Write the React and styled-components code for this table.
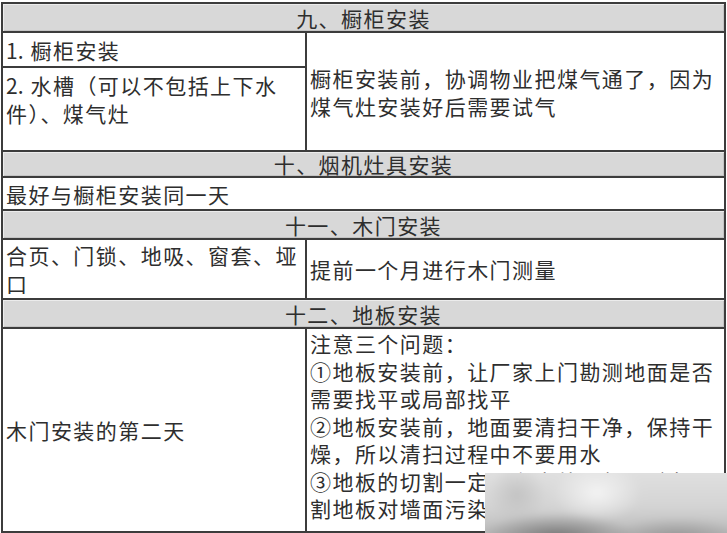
import React from 'react';
import styled, { createGlobalStyle } from 'styled-components';

const GlobalStyle = createGlobalStyle`
  html, body {
    margin: 0;
    padding: 0;
    background: #ffffff;
  }
  body {
    font-family: "Noto Sans CJK SC", "Noto Sans", sans-serif;
    color: #2e2e2e;
  }
`;

const Page = styled.div`
  position: relative;
  width: 727px;
  height: 533px;
  overflow: hidden;
  padding-top: 2px;
  padding-left: 1px;
  box-sizing: border-box;
`;

const Sheet = styled.div`
  display: grid;
  width: 725px;
  grid-template-columns: 304px 1fr;
  grid-template-rows: 29px 35px 84px 26px 33px 29px 60px 29px 204px;
  border-top: 2px solid #3c3c3c;
  border-left: 2px solid #3c3c3c;
  box-sizing: border-box;
`;

const Cell = styled.div`
  box-sizing: border-box;
  border-right: 2px solid #3c3c3c;
  border-bottom: 2px solid #3c3c3c;
  display: flex;
  flex-direction: column;
  justify-content: ${(p) => (p.$top ? 'flex-start' : 'center')};
  padding: ${(p) => (p.$top ? '1px 0 0 3px' : '0 0 0 3px')};
  font-size: 21px;
  letter-spacing: 1.45px;
  line-height: ${(p) => p.$lh || '28px'};
  white-space: nowrap;
  overflow: hidden;
  grid-column: ${(p) => p.$col || 'auto'};
  grid-row: ${(p) => p.$row || 'auto'};
`;

const Heading = styled(Cell)`
  grid-column: 1 / span 2;
  background: #d8d8d8;
  align-items: center;
  padding: 0;
  overflow: visible;
  box-shadow: inset 1px 1px 0 #ececec, inset -1px -1px 0 #c4c4c4;
  line-height: 22px;
`;

const Num = styled.span`
  letter-spacing: 0;
  margin-right: 7px;
`;

const Watermark = styled.div`
  position: absolute;
  z-index: 5;
  left: 485px;
  top: 473px;
  width: 242px;
  height: 60px;
  overflow: hidden;
  background: #d2d2d2;
`;

const Smear = styled.div`
  position: absolute;
  left: -8px;
  top: -8px;
  width: 258px;
  height: 76px;
  background:
    radial-gradient(ellipse 80px 24px at 80px 72px, rgba(95,95,95,0.75), rgba(95,95,95,0) 100%),
    radial-gradient(ellipse 70px 22px at 200px 74px, rgba(120,120,120,0.6), rgba(120,120,120,0) 100%),
    radial-gradient(ellipse 30px 30px at 40px 30px, rgba(190,190,190,0.8), rgba(190,190,190,0) 100%),
    radial-gradient(ellipse 45px 30px at 120px 28px, rgba(248,248,248,0.85), rgba(248,248,248,0) 100%),
    linear-gradient(to bottom, #e2e2e2 0%, #d4d4d4 55%, #b4b4b4 100%);
  filter: blur(3px);
`;

export default function App() {
  return (
    <>
      <GlobalStyle />
      <Page>
        <Sheet>
          <Heading $row="1">九、橱柜安装</Heading>
          <Cell $col="1" $row="2"><div><Num>1.</Num>橱柜安装</div></Cell>
          <Cell $col="1" $row="3" $top>
            <div style={{ paddingTop: 2 }}><Num>2.</Num>水槽（可以不包括上下水</div>
            <div>件）、煤气灶</div>
          </Cell>
          <Cell $col="2" $row="2 / span 2">
            <div>橱柜安装前，协调物业把煤气通了，因为</div>
            <div>煤气灶安装好后需要试气</div>
          </Cell>
          <Heading $row="4">十、烟机灶具安装</Heading>
          <Cell $col="1 / span 2" $row="5">最好与橱柜安装同一天</Cell>
          <Heading $row="6">十一、木门安装</Heading>
          <Cell $col="1" $row="7">
            <div>合页、门锁、地吸、窗套、垭</div>
            <div>口</div>
          </Cell>
          <Cell $col="2" $row="7">提前一个月进行木门测量</Cell>
          <Heading $row="8">十二、地板安装</Heading>
          <Cell $col="1" $row="9">木门安装的第二天</Cell>
          <Cell $col="2" $row="9" $top $lh="27.5px">
            <div>注意三个问题：</div>
            <div>①地板安装前，让厂家上门勘测地面是否</div>
            <div>需要找平或局部找平</div>
            <div>②地板安装前，地面要清扫干净，保持干</div>
            <div>燥，所以清扫过程中不要用水</div>
            <div>③地板的切割一定要在室外进行，避免切</div>
            <div>割地板对墙面污染</div>
          </Cell>
        </Sheet>
        <Watermark>
          <Smear />
        </Watermark>
      </Page>
    </>
  );
}
